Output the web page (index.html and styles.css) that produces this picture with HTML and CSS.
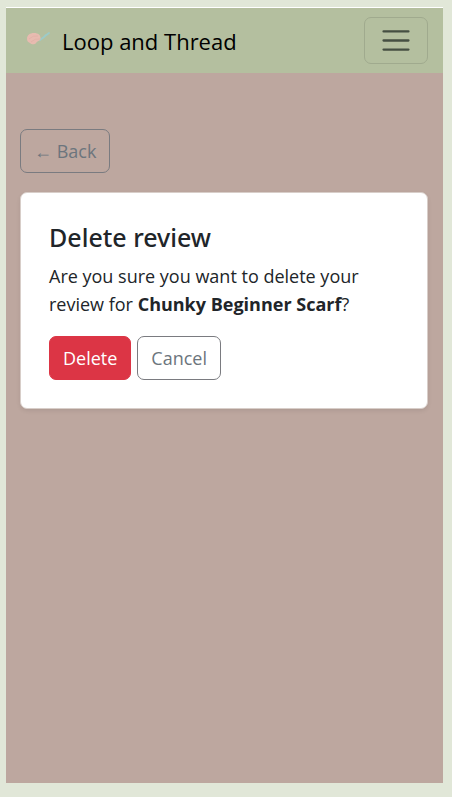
FILE: index.html
```
<!DOCTYPE html>
<html lang="en">
<head>
<meta charset="utf-8">
<meta name="viewport" content="width=device-width, initial-scale=1">
<title>Delete review</title>
<link rel="stylesheet" href="styles.css">
</head>
<body>
<div class="frame">
  <header class="navbar">
    <a class="brand" href="#">
      <svg class="logo" viewBox="0 0 28 20" aria-hidden="true">
        <path d="M16 9 L20 6 L22 4 M21 5 L25 2" fill="none" stroke="#9ccbc8" stroke-width="1.9" stroke-linecap="round"/>
        <path d="M3 8 C3 4 6 2 10 2 C14 2 17 4 16.500 8 C16 10 13 10 12 12 C10 14.500 7 13 6 12 C4 11 3 10 3 8Z" fill="#e8bbb0"/>
        <path d="M5 8 Q9 4 14 5 M7 11 Q11 7 16 8" fill="none" stroke="#dfafa5" stroke-width=".7"/>
      </svg>
      <span>Loop and Thread</span>
    </a>
    <button class="toggler" type="button" aria-label="Toggle navigation">
      <svg class="toggler-icon" viewBox="0 0 30 30" aria-hidden="true">
        <path d="M4 7h22M4 15h22M4 23h22" fill="none" stroke="#454f42" stroke-width="2" stroke-linecap="round"/>
      </svg>
    </button>
  </header>
  <main class="content">
    <a class="btn btn-outline" href="#">← Back</a>
    <section class="card">
      <h1 class="title">Delete review</h1>
      <p class="message">Are you sure you want to delete your review for <strong>Chunky Beginner Scarf</strong>?</p>
      <form class="actions">
        <button class="btn btn-danger" type="button">Delete</button>
        <a class="btn btn-outline" href="#">Cancel</a>
      </form>
    </section>
  </main>
</div>
</body>
</html>
```
FILE: styles.css
```
*, *::before, *::after { box-sizing: border-box; }

body {
  margin: 0;
  min-height: 100vh;
  padding: 8px 9px 14px 6px;
  display: flex;
  background: #e1e7d8;
  color: #212529;
  font-family: "Open Sans", "Noto Sans", sans-serif;
  font-size: 18px;
  line-height: 28px;
}

.frame {
  flex: 1;
  min-width: 0;
  background: #bda79f;
  box-shadow: 0 -1px 0 #fff;
}

.navbar {
  display: flex;
  align-items: center;
  justify-content: space-between;
  padding: 9px 15px 9px 18px;
  background: #b4bf9f;
}

.brand {
  display: flex;
  align-items: center;
  gap: 10px;
  color: #000;
  font-size: 22px;
  line-height: 32px;
  text-decoration: none;
}

.logo {
  width: 28px;
  height: 20px;
}

.toggler {
  display: block;
  padding: 5px 14px;
  background: none;
  border: 1px solid #a0aa8e;
  border-radius: 7px;
}

.toggler-icon {
  display: block;
  width: 34px;
  height: 35px;
}

.content {
  padding: 56px 15px 24px 14px;
}

.btn {
  display: inline-block;
  padding: 7px 13px;
  border: 1px solid transparent;
  border-radius: 7px;
  font: inherit;
  text-decoration: none;
}

.btn-outline {
  border-color: #7a7b80;
  color: #6c757d;
}

.btn-danger {
  background: #dc3545;
  border-color: #dc3545;
  color: #fff;
}

.card {
  margin-top: 19px;
  padding: 27px 28px 28px;
  background: #fff;
  border: 1px solid #d8cec9;
  border-radius: 7px;
  box-shadow: 0 2px 4px rgba(0, 0, 0, 0.08);
}

.title {
  margin: 0 0 8px;
  font-family: "Noto Sans", "Open Sans", sans-serif;
  font-size: 25px;
  font-weight: 500;
  line-height: 34px;
}

.message {
  margin: 0 0 18px;
}

.actions {
  display: flex;
  gap: 6px;
}
```
